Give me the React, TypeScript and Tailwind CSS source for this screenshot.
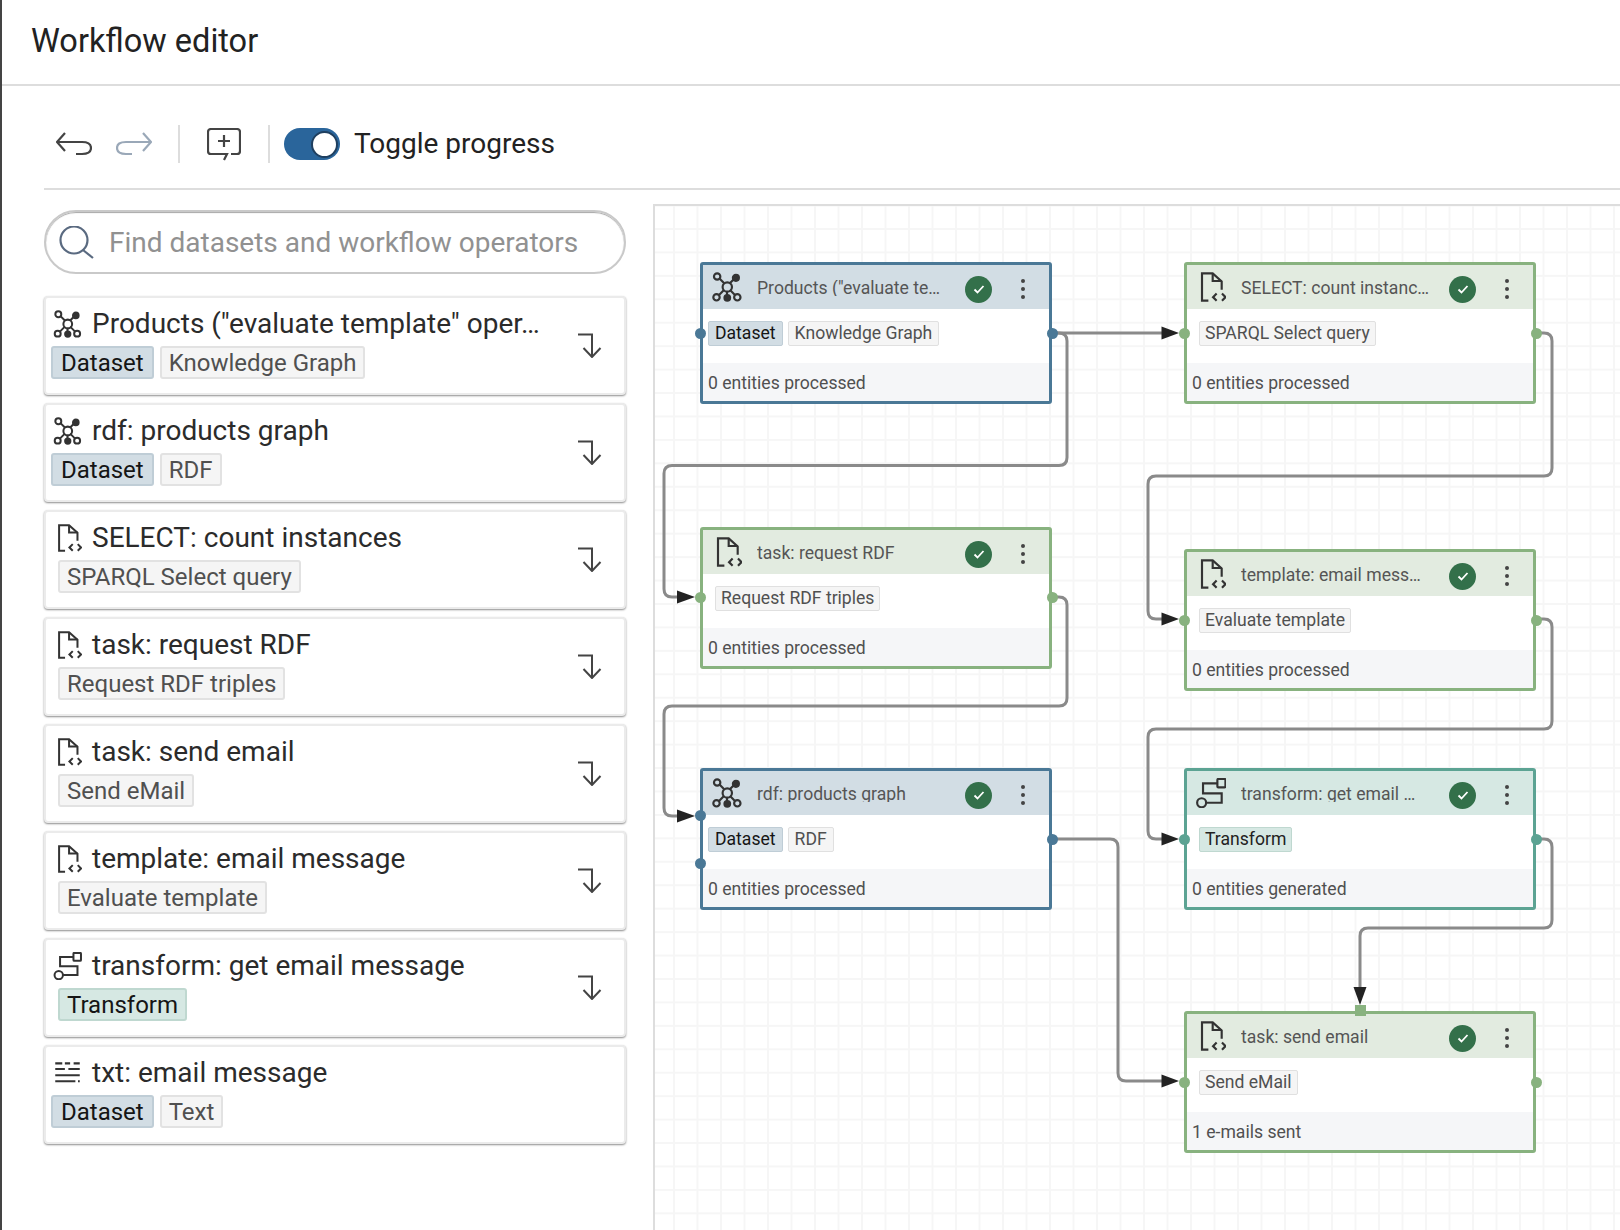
import React from 'react';

type IconKind = 'graph' | 'doc' | 'transform' | 'text';

function TypeIcon({ kind, className }: { kind: IconKind; className: string }) {
  return (
    <svg viewBox="0 0 32 32" fill="none" stroke="#333" strokeWidth="2.3" className={className}>
      {kind === 'graph' && (
        <>
          <path d="M8 7l5 5M23 8l-4 4M7 25l6-6M25 25l-6-6M16 21v4" />
          <circle cx="16.3" cy="16" r="5" />
          <circle cx="5.5" cy="4.8" r="3.4" />
          <circle cx="25.5" cy="6.2" r="3.2" fill="#333" />
          <circle cx="4.8" cy="27" r="3.4" />
          <circle cx="27" cy="27" r="3.4" />
          <circle cx="16.3" cy="27.5" r="3" fill="#333" />
        </>
      )}
      {kind === 'doc' && (
        <>
          <path d="M13.2 30.5H6.4V1.5H17.8L27.4 10V19" />
          <path d="M17.8 1.5V9.6H27.4" />
          <path d="M22 23l-3.8 3.8 3.8 3.8M27.7 23l3.8 3.8-3.8 3.8" />
        </>
      )}
      {kind === 'transform' && (
        <>
          <rect x="22.8" y="1" width="8.6" height="9" rx="1" />
          <path d="M22.8 5.7H7.5V16.4H27.4V26.4H11" />
          <circle cx="6" cy="26.4" r="4.8" />
        </>
      )}
      {kind === 'text' && (
        <path d="M2 5h8M13 5h6M23 5h7M2 11.5h11M17 11.5h13M2 18.5h28M2 25.5h23M28 25.5h2" />
      )}
    </svg>
  );
}

interface SidebarItem {
  kind: IconKind;
  title: string;
  tag: string;
  dataset?: boolean;
  transform?: boolean;
  noArrow?: boolean;
}

const sidebarItems: SidebarItem[] = [
  { kind: 'graph', title: 'Products ("evaluate template" oper…', tag: 'Knowledge Graph', dataset: true },
  { kind: 'graph', title: 'rdf: products graph', tag: 'RDF', dataset: true },
  { kind: 'doc', title: 'SELECT: count instances', tag: 'SPARQL Select query' },
  { kind: 'doc', title: 'task: request RDF', tag: 'Request RDF triples' },
  { kind: 'doc', title: 'task: send email', tag: 'Send eMail' },
  { kind: 'doc', title: 'template: email message', tag: 'Evaluate template' },
  { kind: 'transform', title: 'transform: get email message', tag: 'Transform', transform: true },
  { kind: 'text', title: 'txt: email message', tag: 'Text', dataset: true, noArrow: true },
];

function SidebarCard({ item }: { item: SidebarItem }) {
  const plainTagLeft = !item.dataset;
  return (
    <div className="flex h-[99px] items-center justify-between rounded border-2 border-[#ebebeb] bg-white pr-[22px] shadow-[0_1px_2px_rgba(0,0,0,0.45)]">
      <div className="flex h-full flex-col pt-[8px] pl-[5px]">
        <div className="flex h-[36px] items-center">
          <TypeIcon kind={item.kind} className="ml-[2px] h-[28px] w-[29px]" />
          <span className="ml-[10px] whitespace-nowrap text-[28px] leading-[36px] text-[#2b2b2b]">{item.title}</span>
        </div>
        <div className={`mt-[4px] flex gap-[6px] ${plainTagLeft ? 'ml-[7px]' : ''}`}>
          {item.dataset && (
            <span className="flex h-[33px] items-center rounded-[3px] border-2 border-[#bfcdd6] bg-[#d2dde4] px-[8px] text-[24px] text-[#151515]">
              Dataset
            </span>
          )}
          <span
            className={
              item.transform
                ? 'flex h-[33px] items-center rounded-[3px] border-2 border-[#bfd8d0] bg-[#d6e8e3] px-[7px] text-[24px] text-[#151515]'
                : 'flex h-[33px] items-center rounded-[3px] border-2 border-[#e2e2e2] bg-[#f5f5f5] px-[7px] text-[24px] text-[#505050]'
            }
          >
            {item.tag}
          </span>
        </div>
      </div>
      {!item.noArrow && (
        <svg viewBox="0 0 24 25" fill="none" stroke="#444" strokeWidth="2" className="h-[25px] w-[24px]">
          <path d="M0 1.5H14V24M5.5 15L14 24L22.5 15" />
        </svg>
      )}
    </div>
  );
}

type Tone = 'blue' | 'green' | 'teal';

const toneBorder: Record<Tone, string> = {
  blue: 'border-[#4a7896]',
  green: 'border-[#88b27f]',
  teal: 'border-[#5ca393]',
};
const toneHeader: Record<Tone, string> = {
  blue: 'bg-[#d2dde4]',
  green: 'bg-[#e2ebe0]',
  teal: 'bg-[#d6e8e3]',
};
const tonePort: Record<Tone, string> = {
  blue: 'bg-[#4a7896]',
  green: 'bg-[#88b27f]',
  teal: 'bg-[#5ca393]',
};

interface NodeData {
  place: string;
  tone: Tone;
  kind: IconKind;
  title: string;
  tag: string;
  footer: string;
  leftPort: string;
  rightPort: string;
  secondLeftPort?: boolean;
}

const nodes: NodeData[] = [
  { place: 'left-[45px] top-[56px]', tone: 'blue', kind: 'graph', title: 'Products ("evaluate te…', tag: 'Knowledge Graph', footer: '0 entities processed', leftPort: 'top-[62.5px]', rightPort: 'top-[62.5px]' },
  { place: 'left-[529px] top-[56px]', tone: 'green', kind: 'doc', title: 'SELECT: count instanc…', tag: 'SPARQL Select query', footer: '0 entities processed', leftPort: 'top-[62.5px]', rightPort: 'top-[62.5px]' },
  { place: 'left-[45px] top-[321px]', tone: 'green', kind: 'doc', title: 'task: request RDF', tag: 'Request RDF triples', footer: '0 entities processed', leftPort: 'top-[61.5px]', rightPort: 'top-[61.5px]' },
  { place: 'left-[529px] top-[343px]', tone: 'green', kind: 'doc', title: 'template: email mess…', tag: 'Evaluate template', footer: '0 entities processed', leftPort: 'top-[62.5px]', rightPort: 'top-[62.5px]' },
  { place: 'left-[45px] top-[562px]', tone: 'blue', kind: 'graph', title: 'rdf: products graph', tag: 'RDF', footer: '0 entities processed', leftPort: 'top-[39px]', rightPort: 'top-[62.5px]', secondLeftPort: true },
  { place: 'left-[529px] top-[562px]', tone: 'teal', kind: 'transform', title: 'transform: get email …', tag: 'Transform', footer: '0 entities generated', leftPort: 'top-[62.5px]', rightPort: 'top-[62.5px]' },
  { place: 'left-[529px] top-[805px]', tone: 'green', kind: 'doc', title: 'task: send email', tag: 'Send eMail', footer: '1 e-mails sent', leftPort: 'top-[62.5px]', rightPort: 'top-[62.5px]' },
];

function WorkflowNode({ node }: { node: NodeData }) {
  const isDataset = node.kind === 'graph';
  const isTransform = node.kind === 'transform';
  return (
    <div className={`absolute flex h-[142px] w-[352px] flex-col rounded-[3px] border-[3px] bg-white ${node.place} ${toneBorder[node.tone]}`}>
      <div className={`flex h-[44px] shrink-0 items-center pl-[9px] ${toneHeader[node.tone]}`}>
        <TypeIcon kind={node.kind} className="h-[30px] w-[30px]" />
        {/* the tight line box cuts the descenders, as the editor does */}
        <span className="ml-[15px] mt-[2px] h-[16px] w-[208px] overflow-hidden whitespace-nowrap text-[17.6px] leading-[16px] text-[#555]">
          {node.title}
        </span>
        <span className="mt-[4px] flex h-[27px] w-[27px] items-center justify-center rounded-full bg-[#33704a]">
          <svg viewBox="0 0 16 16" fill="none" stroke="#fff" strokeWidth="1.8" className="h-[16px] w-[16px]">
            <path d="M3.5 8.5l3 3 6-6.5" />
          </svg>
        </span>
        <span className="ml-[29px] mt-[4px] flex flex-col gap-[4px]">
          <span className="h-[4px] w-[4px] rounded-full bg-[#444]" />
          <span className="h-[4px] w-[4px] rounded-full bg-[#444]" />
          <span className="h-[4px] w-[4px] rounded-full bg-[#444]" />
        </span>
      </div>
      <div className="flex flex-1 items-start gap-[5px] pt-[12px] pl-[5px]">
        {isDataset && (
          <span className="flex h-[25px] items-center rounded-[2px] border border-[#bfcdd6] bg-[#d2dde4] px-[6px] text-[17.6px] text-[#151515]">
            Dataset
          </span>
        )}
        <span
          className={
            isTransform
              ? 'ml-[7px] flex h-[25px] items-center rounded-[2px] border border-[#bfd8d0] bg-[#d6e8e3] px-[5px] text-[17.6px] text-[#222]'
              : isDataset
                ? 'flex h-[25px] items-center rounded-[2px] border border-[#e0e0e0] bg-[#f5f5f5] px-[6px] text-[17.6px] text-[#505050]'
                : 'ml-[7px] flex h-[25px] items-center rounded-[2px] border border-[#e0e0e0] bg-[#f5f5f5] px-[5px] text-[17.6px] text-[#505050]'
          }
        >
          {node.tag}
        </span>
      </div>
      <div className="flex h-[38px] shrink-0 items-center bg-[#f5f6f8] pl-[5px] pt-[2px] text-[17.6px] text-[#505050]">{node.footer}</div>
      <span className={`absolute -left-[8.5px] h-[11px] w-[11px] rounded-full ${node.leftPort} ${tonePort[node.tone]}`} />
      {node.secondLeftPort && <span className={`absolute -left-[8.5px] top-[87px] h-[11px] w-[11px] rounded-full ${tonePort[node.tone]}`} />}
      <span className={`absolute -right-[8.5px] h-[11px] w-[11px] rounded-full ${node.rightPort} ${tonePort[node.tone]}`} />
    </div>
  );
}

// page coordinates, the svg's viewBox maps them onto the canvas
const edgePaths = [
  'M1052 333H1165',
  'M1052 333H1059Q1067 333 1067 341V457.5Q1067 465.5 1059 465.5H672Q664 465.5 664 473.5V589Q664 597 672 597H680',
  'M1537 333H1544Q1552 333 1552 341V468Q1552 476 1544 476H1156Q1148 476 1148 484V611Q1148 619 1156 619H1165',
  'M1052 597H1059Q1067 597 1067 605V698Q1067 706 1059 706H672Q664 706 664 714V808Q664 816 672 816H680',
  'M1052 839H1110Q1118 839 1118 847V1073Q1118 1081 1126 1081H1165',
  'M1537 619H1544Q1552 619 1552 627V721Q1552 729 1544 729H1156Q1148 729 1148 737V831Q1148 839 1156 839H1165',
  'M1537 839H1544Q1552 839 1552 847V920Q1552 928 1544 928H1368Q1360 928 1360 936V990',
];

const arrowHeads = [
  '1161.5,326.5 1179,333 1161.5,339.5',
  '677,590.5 695,597 677,603.5',
  '1161.5,612.5 1179,619 1161.5,625.5',
  '677,809.5 695,816 677,822.5',
  '1161.5,1074.5 1179,1081 1161.5,1087.5',
  '1161.5,832.5 1179,839 1161.5,845.5',
  '1353.5,987 1366.5,987 1360,1005',
];

export default function App() {
  return (
    <div className="flex h-[1230px] w-[1620px] flex-col overflow-hidden border-l-2 border-[#444] bg-white font-[Roboto,sans-serif]">
      <header className="flex h-[86px] shrink-0 items-center border-b-2 border-[#ddd] pb-[2px] pl-[29px]">
        <h1 className="text-[32.5px] font-normal text-[#222]">Workflow editor</h1>
      </header>

      <div className="flex min-h-0 flex-1 flex-col pl-[42px]">
        {/* Toolbar */}
        <div className="flex h-[104px] shrink-0 items-center border-b-2 border-[#ddd] pl-[12px] pt-[14px]">
          <svg viewBox="0 0 36 24" fill="none" stroke="#444" strokeWidth="2.2" className="h-[24px] w-[36px]">
            <path d="M9 1L1 10L9 19M1 10H26Q35 10 35 16Q35 22 26 22H20" />
          </svg>
          <svg viewBox="0 0 36 24" fill="none" stroke="#9aa8b8" strokeWidth="2.2" className="ml-[24px] h-[24px] w-[36px]">
            <path d="M27 1L35 10L27 19M35 10H10Q1 10 1 16Q1 22 10 22H16" />
          </svg>
          <span className="ml-[26px] h-[38px] w-[2px] bg-[#ddd]" />
          <svg viewBox="0 0 34 33" fill="none" stroke="#444" strokeWidth="2.2" className="ml-[27px] h-[33px] w-[34px]">
            <path d="M24 26H30Q33 26 33 23V4Q33 1 30 1H4Q1 1 1 4V23Q1 26 4 26H20L17 32" />
            <path d="M17 7V19M11 13H23" />
          </svg>
          <span className="ml-[27px] h-[38px] w-[2px] bg-[#ddd]" />
          <span className="ml-[14px] flex h-[32px] w-[56px] items-center justify-end rounded-full bg-[#2a659b] pr-[2px]">
            <span className="h-[27px] w-[27px] rounded-full border-2 border-[#1f3f5f] bg-white" />
          </span>
          <span className="ml-[14px] text-[28px] text-[#222]">Toggle progress</span>
        </div>

        <div className="flex min-h-0 flex-1">
          {/* Operator list */}
          <div className="flex w-[582px] shrink-0 flex-col">
            <div className="mt-[20px] flex h-[64px] items-center rounded-full border-2 border-[#c9c9c9] pl-[13px] shadow-[inset_0_1px_1px_rgba(0,0,0,0.35)]">
              <svg viewBox="0 0 35 33" fill="none" stroke="#5a6a80" strokeWidth="2.2" className="h-[33px] w-[35px]">
                <circle cx="15" cy="14" r="13.5" />
                <path d="M24 24L34 32" />
              </svg>
              <span className="ml-[15px] pt-[2px] text-[28px] text-[#919191]">Find datasets and workflow operators</span>
            </div>
            <div className="mt-[22px] flex flex-col gap-[8px]">
              {sidebarItems.map((item) => (
                <SidebarCard key={item.title} item={item} />
              ))}
            </div>
          </div>

          {/* Canvas */}
          <div className="relative ml-[27px] mt-[14px] flex-1 border-t-2 border-l-2 border-[#ddd] bg-[linear-gradient(to_right,#f6f6f6_2px,transparent_2px),linear-gradient(to_bottom,#f6f6f6_2px,transparent_2px)] bg-[size:23.5px_23.45px] bg-[position:18px_22px]">
            <svg viewBox="655 206 965 1024" fill="none" className="absolute left-0 top-0 h-[1024px] w-[965px]">
              {edgePaths.map((d) => (
                <path key={d} d={d} stroke="#8a8a8a" strokeWidth="3" />
              ))}
              {arrowHeads.map((p) => (
                <polygon key={p} points={p} fill="#222" />
              ))}
            </svg>
            {nodes.map((node) => (
              <WorkflowNode key={node.title} node={node} />
            ))}
            <span className="absolute left-[700px] top-[799px] h-[11px] w-[11px] bg-[#88b27f]" />
          </div>
        </div>
      </div>
    </div>
  );
}
